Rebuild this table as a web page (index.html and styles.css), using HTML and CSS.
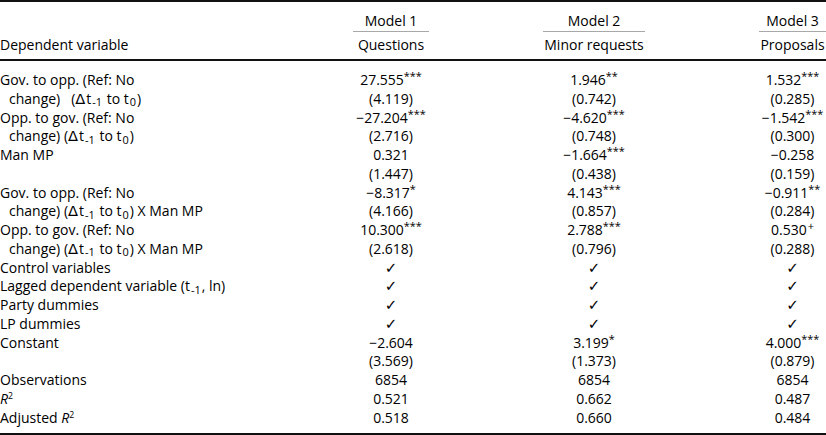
FILE: index.html
```html
<!DOCTYPE html>
<html>
<head>
<meta charset="utf-8">
<link rel="stylesheet" href="styles.css">
</head>
<body>
<div class="table">
  <div class="head">
    <div class="row r1">
      <div class="lab"></div>
      <div class="hc rule">Model 1</div>
      <div class="hc rule">Model 2</div>
      <div class="hc rule">Model 3</div>
    </div>
    <div class="row r2">
      <div class="lab">Dependent variable</div>
      <div class="hc">Questions</div>
      <div class="hc">Minor requests</div>
      <div class="hc">Proposals</div>
    </div>
  </div>
  <div class="body">
    <div class="row">
      <div class="lab"><span class="ln">Gov. to opp. (Ref: No</span><span class="ln ind">change)&nbsp;&nbsp; (<span class="delta">Δ</span>t<sub>-1</sub> to t<sub>0</sub>)</span></div>
      <div class="v"><span>27.555<sup>***</sup></span><span>(4.119)</span></div>
      <div class="v"><span>1.946<sup>**</sup></span><span>(0.742)</span></div>
      <div class="v"><span>1.532<sup>***</sup></span><span>(0.285)</span></div>
    </div>
    <div class="row">
      <div class="lab"><span class="ln">Opp. to gov. (Ref: No</span><span class="ln ind">change) (<span class="delta">Δ</span>t<sub>-1</sub> to t<sub>0</sub>)</span></div>
      <div class="v"><span>−27.204<sup>***</sup></span><span>(2.716)</span></div>
      <div class="v"><span>−4.620<sup>***</sup></span><span>(0.748)</span></div>
      <div class="v"><span>−1.542<sup>***</sup></span><span>(0.300)</span></div>
    </div>
    <div class="row">
      <div class="lab"><span class="ln">Man MP</span></div>
      <div class="v"><span>0.321</span><span>(1.447)</span></div>
      <div class="v"><span>−1.664<sup>***</sup></span><span>(0.438)</span></div>
      <div class="v"><span>−0.258</span><span>(0.159)</span></div>
    </div>
    <div class="row">
      <div class="lab"><span class="ln">Gov. to opp. (Ref: No</span><span class="ln ind">change) (<span class="delta">Δ</span>t<sub>-1</sub> to t<sub>0</sub>) X Man MP</span></div>
      <div class="v"><span>−8.317<sup>*</sup></span><span>(4.166)</span></div>
      <div class="v"><span>4.143<sup>***</sup></span><span>(0.857)</span></div>
      <div class="v"><span>−0.911<sup>**</sup></span><span>(0.284)</span></div>
    </div>
    <div class="row">
      <div class="lab"><span class="ln">Opp. to gov. (Ref: No</span><span class="ln ind">change) (<span class="delta">Δ</span>t<sub>-1</sub> to t<sub>0</sub>) X Man MP</span></div>
      <div class="v"><span>10.300<sup>***</sup></span><span>(2.618)</span></div>
      <div class="v"><span>2.788<sup>***</sup></span><span>(0.796)</span></div>
      <div class="v"><span>0.530<sup class="plus">+</sup></span><span>(0.288)</span></div>
    </div>
    <div class="row">
      <div class="lab"><span class="ln">Control variables</span></div>
      <div class="v"><span class="chk">✓</span></div>
      <div class="v"><span class="chk">✓</span></div>
      <div class="v"><span class="chk">✓</span></div>
    </div>
    <div class="row">
      <div class="lab"><span class="ln">Lagged dependent variable (t<sub>-1</sub>, ln)</span></div>
      <div class="v"><span class="chk">✓</span></div>
      <div class="v"><span class="chk">✓</span></div>
      <div class="v"><span class="chk">✓</span></div>
    </div>
    <div class="row">
      <div class="lab"><span class="ln">Party dummies</span></div>
      <div class="v"><span class="chk">✓</span></div>
      <div class="v"><span class="chk">✓</span></div>
      <div class="v"><span class="chk">✓</span></div>
    </div>
    <div class="row">
      <div class="lab"><span class="ln">LP dummies</span></div>
      <div class="v"><span class="chk">✓</span></div>
      <div class="v"><span class="chk">✓</span></div>
      <div class="v"><span class="chk">✓</span></div>
    </div>
    <div class="row">
      <div class="lab"><span class="ln">Constant</span></div>
      <div class="v"><span>−2.604</span><span>(3.569)</span></div>
      <div class="v"><span>3.199<sup>*</sup></span><span>(1.373)</span></div>
      <div class="v"><span>4.000<sup>***</sup></span><span>(0.879)</span></div>
    </div>
    <div class="row">
      <div class="lab"><span class="ln">Observations</span></div>
      <div class="v"><span>6854</span></div>
      <div class="v"><span>6854</span></div>
      <div class="v"><span>6854</span></div>
    </div>
    <div class="row">
      <div class="lab"><span class="ln"><i>R</i><sup class="sq">2</sup></span></div>
      <div class="v"><span>0.521</span></div>
      <div class="v"><span>0.662</span></div>
      <div class="v"><span>0.487</span></div>
    </div>
    <div class="row">
      <div class="lab"><span class="ln">Adjusted <i>R</i><sup class="sq">2</sup></span></div>
      <div class="v"><span>0.518</span></div>
      <div class="v"><span>0.660</span></div>
      <div class="v"><span>0.484</span></div>
    </div>
  </div>
</div>
</body>
</html>
```

FILE: styles.css
```css
html, body {
  margin: 0;
  padding: 0;
  background: #fff;
  overflow: hidden;
}

body {
  font-family: "Open Sans", "Noto Sans", sans-serif;
  font-size: 14px;
  color: #000;
}

.table {
  width: 826px;
  border-top: 2px solid #111;
  border-bottom: 2px solid #111;
}

.row {
  display: grid;
  grid-template-columns: 239px 76px 102px 67px;
  column-gap: 114px;
}

.head {
  border-bottom: 2px solid #111;
}

.head .row {
  line-height: 18px;
}

.r1 {
  padding-top: 10px;
}

.r1 .hc {
  padding-bottom: 1px;
}

.rule {
  border-bottom: 1px solid #a8a8a8;
}

.r2 {
  padding-top: 4px;
  padding-bottom: 5px;
}

.hc {
  white-space: nowrap;
  display: flex;
  justify-content: center;
}

.body {
  padding-top: 10px;
  padding-bottom: 6px;
}

.lab {
  white-space: nowrap;
  display: flex;
  flex-direction: column;
}

.ln,
.v > span {
  display: block;
  height: 18.75px;
  line-height: 18.75px;
}

.ind {
  padding-left: 9px;
}

.v {
  display: flex;
  flex-direction: column;
  align-items: center;
  white-space: nowrap;
}

sup {
  font-size: 0.78em;
  line-height: 0;
  vertical-align: 0.42em;
}

sup.plus {
  margin-left: 1px;
}

sup.sq {
  font-size: 0.62em;
  vertical-align: 0.55em;
}

sub {
  font-size: 0.78em;
  line-height: 0;
  vertical-align: -0.22em;
  margin: 0 1px;
}

.delta {
  font-family: "DejaVu Sans", sans-serif;
  font-size: 1.05em;
  line-height: 0;
  margin-right: 1px;
}

.chk {
  font-family: "DejaVu Sans", sans-serif;
  font-weight: bold;
  font-size: 15px;
}
```
